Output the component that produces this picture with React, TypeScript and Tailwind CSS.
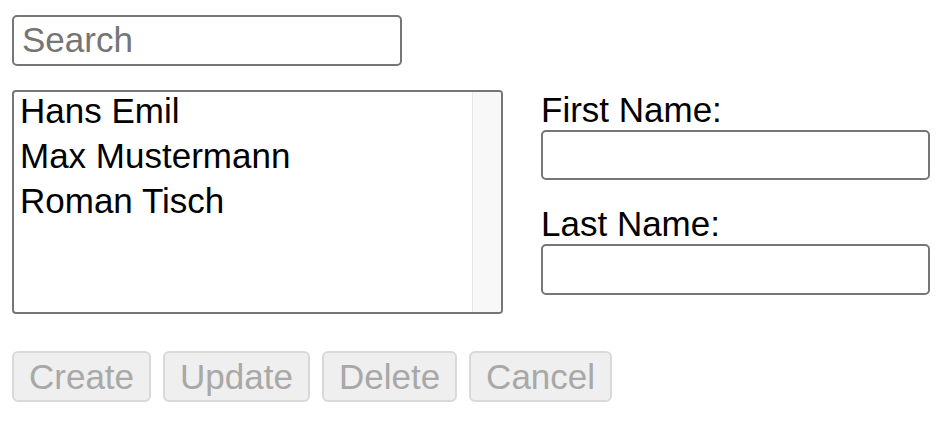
const people = ['Hans Emil', 'Max Mustermann', 'Roman Tisch']

export default function App() {
  return (
    <div className="min-h-screen bg-white pl-[12px] pt-[15px] font-['Liberation_Sans',Arial,sans-serif] text-[35px] text-black">
      <input
        placeholder="Search"
        className="block h-[51px] w-[390px] rounded-[5px] border-2 border-[#767676] bg-white px-[8px] text-[35px] outline-none placeholder:text-[#757575]"
      />

      <div className="mt-[24px] flex items-start gap-[38px]">
        <div className="flex h-[224px] w-[491px] overflow-hidden rounded-[4px] border-2 border-[#767676] bg-white">
          <ul className="flex-1 px-[6px]">
            {people.map((p) => (
              <li key={p} className="h-[45px] leading-[38px]">
                {p}
              </li>
            ))}
          </ul>
          <div className="w-[29px] border-l border-[#e6e6e6] bg-[#f8f8f8]" />
        </div>

        <div className="flex w-[389px] flex-col">
          <label className="leading-[40px]">First Name:</label>
          <input className="block h-[50px] w-full rounded-[5px] border-2 border-[#767676] bg-white px-[8px] text-[35px] outline-none" />
          <label className="mt-[24px] leading-[40px]">Last Name:</label>
          <input className="block h-[51px] w-full rounded-[5px] border-2 border-[#767676] bg-white px-[8px] text-[35px] outline-none" />
        </div>
      </div>

      <div className="mt-[37px] flex gap-[12px]">
        {['Create', 'Update', 'Delete', 'Cancel'].map((b) => (
          <button
            key={b}
            disabled
            className="h-[51px] rounded-[6px] border-2 border-[#d9d9d9] bg-[#efefef] px-[15px] text-[35px] leading-none text-[#a8a8a8]"
          >
            {b}
          </button>
        ))}
      </div>
    </div>
  )
}
